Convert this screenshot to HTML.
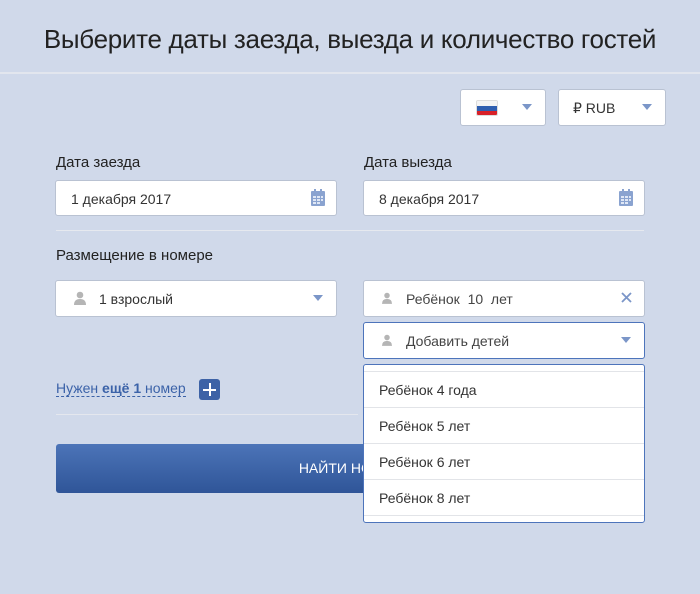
<!DOCTYPE html>
<html><head><meta charset="utf-8"><style>
*{box-sizing:border-box;margin:0;padding:0}
body{width:700px;height:594px;background:#d0d9ea;font-family:"Liberation Sans","DejaVu Sans",sans-serif;color:#333;position:relative;overflow:hidden}
.a{position:absolute}
.title{left:0;top:24px;width:700px;text-align:center;font-size:26px;color:#222;letter-spacing:-0.3px}
.hr{height:2px;background:#e2e6ee}
.box{background:#fff;border:1px solid #b9c2d2;border-radius:3px;font-size:14px;color:#333}
.lbl{font-size:15px;color:#222}
.tri{position:absolute;width:0;height:0;border-left:5px solid transparent;border-right:5px solid transparent;border-top:6px solid #7b96c8}
.txt{position:absolute;top:10px}
.person{position:absolute;width:12px;height:14px}
.opt{height:36px;border-bottom:1px solid #e2e4e8;padding:10px 0 0 15px;font-size:14px;color:#333}
</style></head><body>
<div class="a title">Выберите даты заезда, выезда и количество гостей</div>
<div class="a hr" style="left:0;top:72px;width:700px"></div>

<div class="a box" style="left:460px;top:89px;width:86px;height:37px">
 <div class="a" style="left:15px;top:10px;width:22px;height:16px;border-radius:2px;overflow:hidden;border:1px solid #ddd">
  <div style="height:5px;background:#f4f4f4"></div><div style="height:5px;background:#2f5fb0"></div><div style="height:5px;background:#d82028"></div></div>
 <div class="tri" style="left:61px;top:14px"></div>
</div>
<div class="a box" style="left:558px;top:89px;width:108px;height:37px">
 <div class="txt" style="left:14px">₽ RUB</div>
 <div class="tri" style="left:83px;top:14px"></div>
</div>

<div class="a lbl" style="left:56px;top:154px">Дата заезда</div>
<div class="a lbl" style="left:364px;top:154px">Дата выезда</div>
<div class="a box" style="left:55px;top:180px;width:282px;height:36px"><div class="txt" style="left:15px">1 декабря 2017</div>
 <svg class="a" style="left:255px;top:8px" width="14" height="17" viewBox="0 0 14 17"><rect x="0" y="2" width="14" height="15" rx="1" fill="#8aa3d0"/><rect x="3" y="0" width="2" height="4" fill="#8aa3d0"/><rect x="9" y="0" width="2" height="4" fill="#8aa3d0"/><g fill="#dfe7f5"><rect x="2" y="7" width="3" height="2"/><rect x="6" y="7" width="3" height="2"/><rect x="10" y="7" width="2" height="2"/><rect x="2" y="10" width="3" height="2"/><rect x="6" y="10" width="3" height="2"/><rect x="10" y="10" width="2" height="2"/><rect x="2" y="13" width="3" height="2"/><rect x="6" y="13" width="3" height="2"/></g></svg></div>
<div class="a box" style="left:363px;top:180px;width:282px;height:36px"><div class="txt" style="left:15px">8 декабря 2017</div>
 <svg class="a" style="left:255px;top:8px" width="14" height="17" viewBox="0 0 14 17"><rect x="0" y="2" width="14" height="15" rx="1" fill="#8aa3d0"/><rect x="3" y="0" width="2" height="4" fill="#8aa3d0"/><rect x="9" y="0" width="2" height="4" fill="#8aa3d0"/><g fill="#dfe7f5"><rect x="2" y="7" width="3" height="2"/><rect x="6" y="7" width="3" height="2"/><rect x="10" y="7" width="2" height="2"/><rect x="2" y="10" width="3" height="2"/><rect x="6" y="10" width="3" height="2"/><rect x="10" y="10" width="2" height="2"/><rect x="2" y="13" width="3" height="2"/><rect x="6" y="13" width="3" height="2"/></g></svg></div>

<div class="a hr" style="left:56px;top:230px;width:588px;height:1px;background:#e6e9ef"></div>
<div class="a lbl" style="left:56px;top:247px">Размещение в номере</div>

<div class="a box" style="left:55px;top:280px;width:282px;height:37px">
 <svg class="person" style="left:18px;top:10px" viewBox="0 0 12 14"><circle cx="6" cy="4" r="3.3" fill="#b5b5b5"/><path d="M0 14 Q0 8 6 8 Q12 8 12 14Z" fill="#b5b5b5"/></svg>
 <div class="txt" style="left:43px">1 взрослый</div><div class="tri" style="left:257px;top:14px"></div></div>
<div class="a box" style="left:363px;top:280px;width:282px;height:37px">
 <svg class="person" style="left:18px;top:11px;width:10px;height:12px" viewBox="0 0 12 14"><circle cx="6" cy="4" r="3.3" fill="#b5b5b5"/><path d="M0 14 Q0 8 6 8 Q12 8 12 14Z" fill="#b5b5b5"/></svg>
 <div class="txt" style="left:42px;color:#444">Ребёнок&nbsp; 10&nbsp; лет</div>
 <svg class="a" style="left:257px;top:11px" width="11" height="11" viewBox="0 0 11 11"><path d="M1 1L10 10M10 1L1 10" stroke="#7b96c8" stroke-width="1.8"/></svg></div>
<div class="a box" style="left:363px;top:322px;width:282px;height:37px;border-color:#4d74bb">
 <svg class="person" style="left:18px;top:11px;width:10px;height:12px" viewBox="0 0 12 14"><circle cx="6" cy="4" r="3.3" fill="#b5b5b5"/><path d="M0 14 Q0 8 6 8 Q12 8 12 14Z" fill="#b5b5b5"/></svg>
 <div class="txt" style="left:42px;color:#444">Добавить детей</div><div class="tri" style="left:257px;top:14px"></div></div>

<div class="a" style="left:56px;top:380px;font-size:14px;color:#3b62a8;border-bottom:1px dashed #3b62a8;line-height:16px">Нужен <b>ещё 1</b> номер</div>
<div class="a" style="left:199px;top:379px;width:21px;height:21px;background:#3d62a6;border-radius:3px">
 <div class="a" style="left:4px;top:9.5px;width:13px;height:2px;background:#fff"></div><div class="a" style="left:9.5px;top:4px;width:2px;height:13px;background:#fff"></div></div>
<div class="a hr" style="left:56px;top:414px;width:302px;height:1px;background:#e4e7ee"></div>

<div class="a" style="left:56px;top:444px;width:589px;height:49px;border-radius:3px;background:linear-gradient(#4c74b8,#2f5598);color:#fff;font-size:14px;text-align:center;line-height:49px">НАЙТИ НОМЕР</div>

<div class="a" style="left:363px;top:364px;width:282px;height:159px;background:#fff;border:1px solid #4d74bb;border-radius:3px;overflow:hidden">
 <div style="height:7px;border-bottom:1px solid #e2e4e8"></div>
 <div class="opt">Ребёнок 4 года</div>
 <div class="opt">Ребёнок 5 лет</div>
 <div class="opt">Ребёнок 6 лет</div>
 <div class="opt">Ребёнок 8 лет</div>
</div>
</body></html>
